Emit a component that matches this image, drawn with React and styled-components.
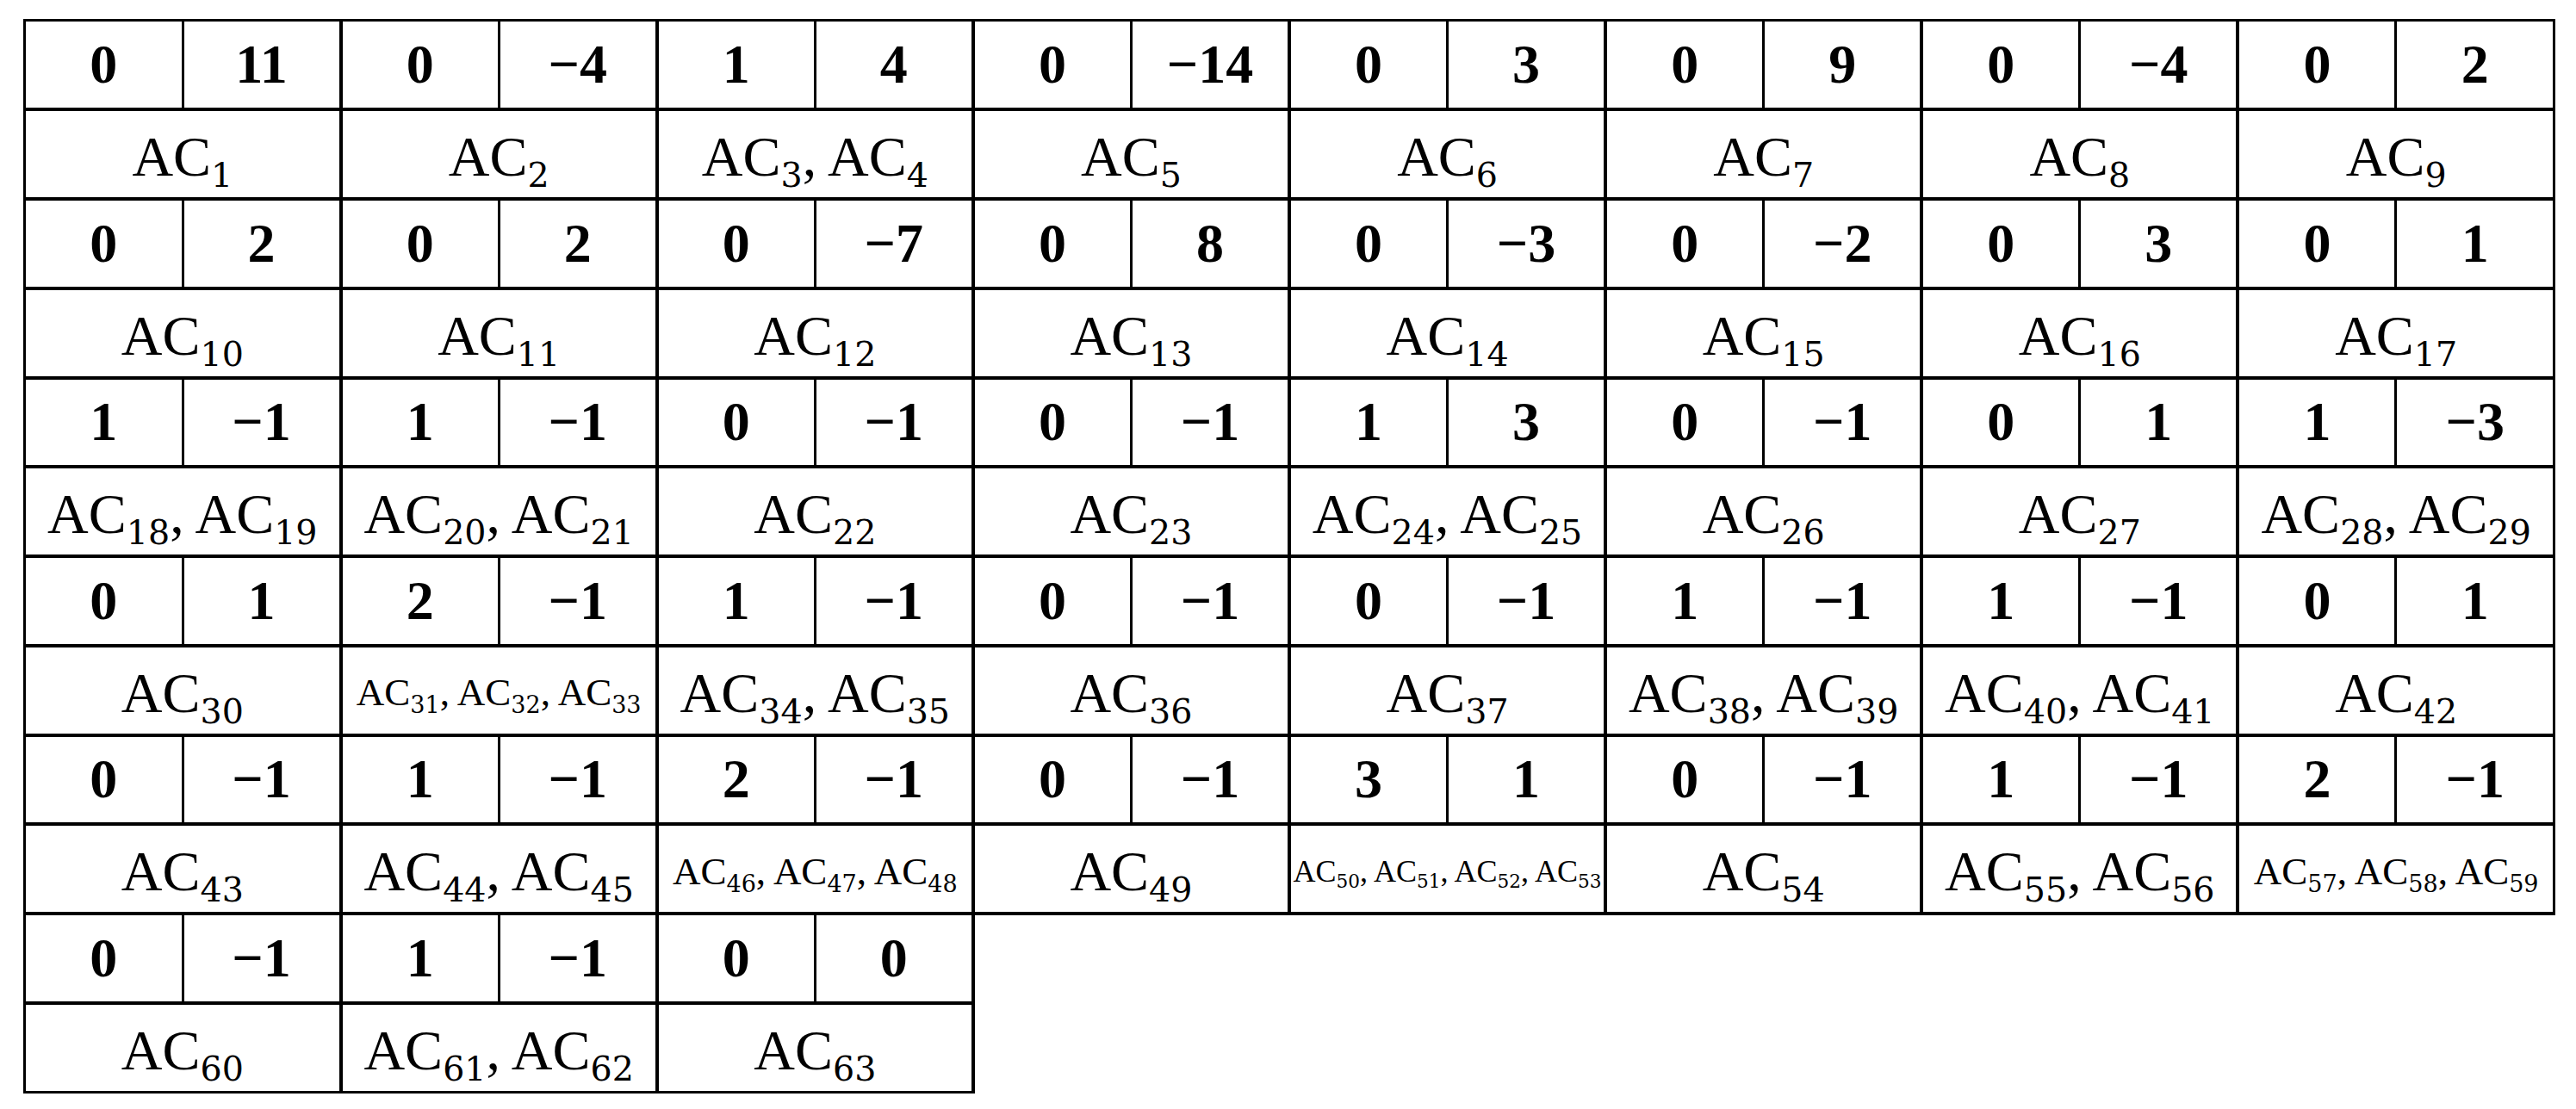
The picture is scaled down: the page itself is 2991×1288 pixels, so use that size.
import React from "react";
import styled, { createGlobalStyle } from "styled-components";

const GlobalStyle = createGlobalStyle`
  html, body { margin: 0; padding: 0; background: #ffffff; }
  body { font-family: "Liberation Serif", "Times New Roman", serif; color: #000; }
`;

const Page = styled.div`
  padding: 22px 0 0 27px;
`;

const Grid = styled.table`
  border-collapse: collapse;
  table-layout: fixed;
  width: 2940px;
`;

const Row = styled.tr`
  height: 103.75px;
`;

const NumCell = styled.td`
  padding: 0;
  text-align: center;
  vertical-align: middle;
  font-family: "Liberation Serif", "Times New Roman", serif;
  font-weight: 700;
  font-size: 64px;
  line-height: 1;
  border-style: solid;
  border-color: #000;
  border-top-width: ${(p) => (p.$first ? 3 : 4)}px;
  border-bottom-width: 4px;
  border-left-width: ${(p) => (p.$side === "left" ? (p.$edgeL ? 3 : 4) : 3)}px;
  border-right-width: ${(p) => (p.$side === "right" ? (p.$edgeR ? 3 : 4) : 3)}px;
`;

const LabelCell = styled.td`
  padding: 0;
  text-align: center;
  vertical-align: middle;
  white-space: nowrap;
  overflow: visible;
  font-family: "Liberation Serif", "Times New Roman", serif;
  font-weight: 400;
  font-size: ${(p) => p.$size}px;
  line-height: 1;
  border-style: solid;
  border-color: #000;
  border-top-width: 4px;
  border-bottom-width: ${(p) => (p.$last ? 3 : 4)}px;
  border-left-width: ${(p) => (p.$edgeL ? 3 : 4)}px;
  border-right-width: ${(p) => (p.$edgeR ? 3 : 4)}px;
`;

const Label = styled.span`
  position: relative;
  top: 3px;
`;

const Sub = styled.sub`
  font-family: "DejaVu Serif", serif;
  font-size: 0.6em;
  vertical-align: -0.34em;
  line-height: 0;
`;

const data = [
  {
    nums: [[0, 11], [0, -4], [1, 4], [0, -14], [0, 3], [0, 9], [0, -4], [0, 2]],
    labels: [[1], [2], [3, 4], [5], [6], [7], [8], [9]],
  },
  {
    nums: [[0, 2], [0, 2], [0, -7], [0, 8], [0, -3], [0, -2], [0, 3], [0, 1]],
    labels: [[10], [11], [12], [13], [14], [15], [16], [17]],
  },
  {
    nums: [[1, -1], [1, -1], [0, -1], [0, -1], [1, 3], [0, -1], [0, 1], [1, -3]],
    labels: [[18, 19], [20, 21], [22], [23], [24, 25], [26], [27], [28, 29]],
  },
  {
    nums: [[0, 1], [2, -1], [1, -1], [0, -1], [0, -1], [1, -1], [1, -1], [0, 1]],
    labels: [[30], [31, 32, 33], [34, 35], [36], [37], [38, 39], [40, 41], [42]],
  },
  {
    nums: [[0, -1], [1, -1], [2, -1], [0, -1], [3, 1], [0, -1], [1, -1], [2, -1]],
    labels: [[43], [44, 45], [46, 47, 48], [49], [50, 51, 52, 53], [54], [55, 56], [57, 58, 59]],
  },
  {
    nums: [[0, -1], [1, -1], [0, 0]],
    labels: [[60], [61, 62], [63]],
  },
];

const fmt = (n) => (n < 0 ? "\u2212" + Math.abs(n) : String(n));
const sizeFor = (count) => (count >= 4 ? 36 : count === 3 ? 45 : 66);

export default function App() {
  return (
    <>
      <GlobalStyle />
      <Page>
        <Grid>
          <colgroup>
            {Array.from({ length: 16 }).map((_, i) => (
              <col key={i} style={{ width: `${100 / 16}%` }} />
            ))}
          </colgroup>
          <tbody>
            {data.map((block, bi) => {
              const full = block.nums.length === 8;
              return (
                <React.Fragment key={bi}>
                  <Row>
                    {block.nums.map(([a, b], gi) => (
                      <React.Fragment key={gi}>
                        <NumCell $side="left" $first={bi === 0} $edgeL={gi === 0}>
                          {fmt(a)}
                        </NumCell>
                        <NumCell
                          $side="right"
                          $first={bi === 0}
                          $edgeR={full && gi === block.nums.length - 1}
                        >
                          {fmt(b)}
                        </NumCell>
                      </React.Fragment>
                    ))}
                  </Row>
                  <Row>
                    {block.labels.map((ids, gi) => (
                      <LabelCell
                        key={gi}
                        colSpan={2}
                        $size={sizeFor(ids.length)}
                        $edgeL={gi === 0}
                        $edgeR={full && gi === block.labels.length - 1}
                        $last={bi === data.length - 1}
                      >
                        <Label>
                          {ids.map((id, k) => (
                            <React.Fragment key={id}>
                              {k > 0 ? ", " : ""}AC<Sub>{id}</Sub>
                            </React.Fragment>
                          ))}
                        </Label>
                      </LabelCell>
                    ))}
                  </Row>
                </React.Fragment>
              );
            })}
          </tbody>
        </Grid>
      </Page>
    </>
  );
}
